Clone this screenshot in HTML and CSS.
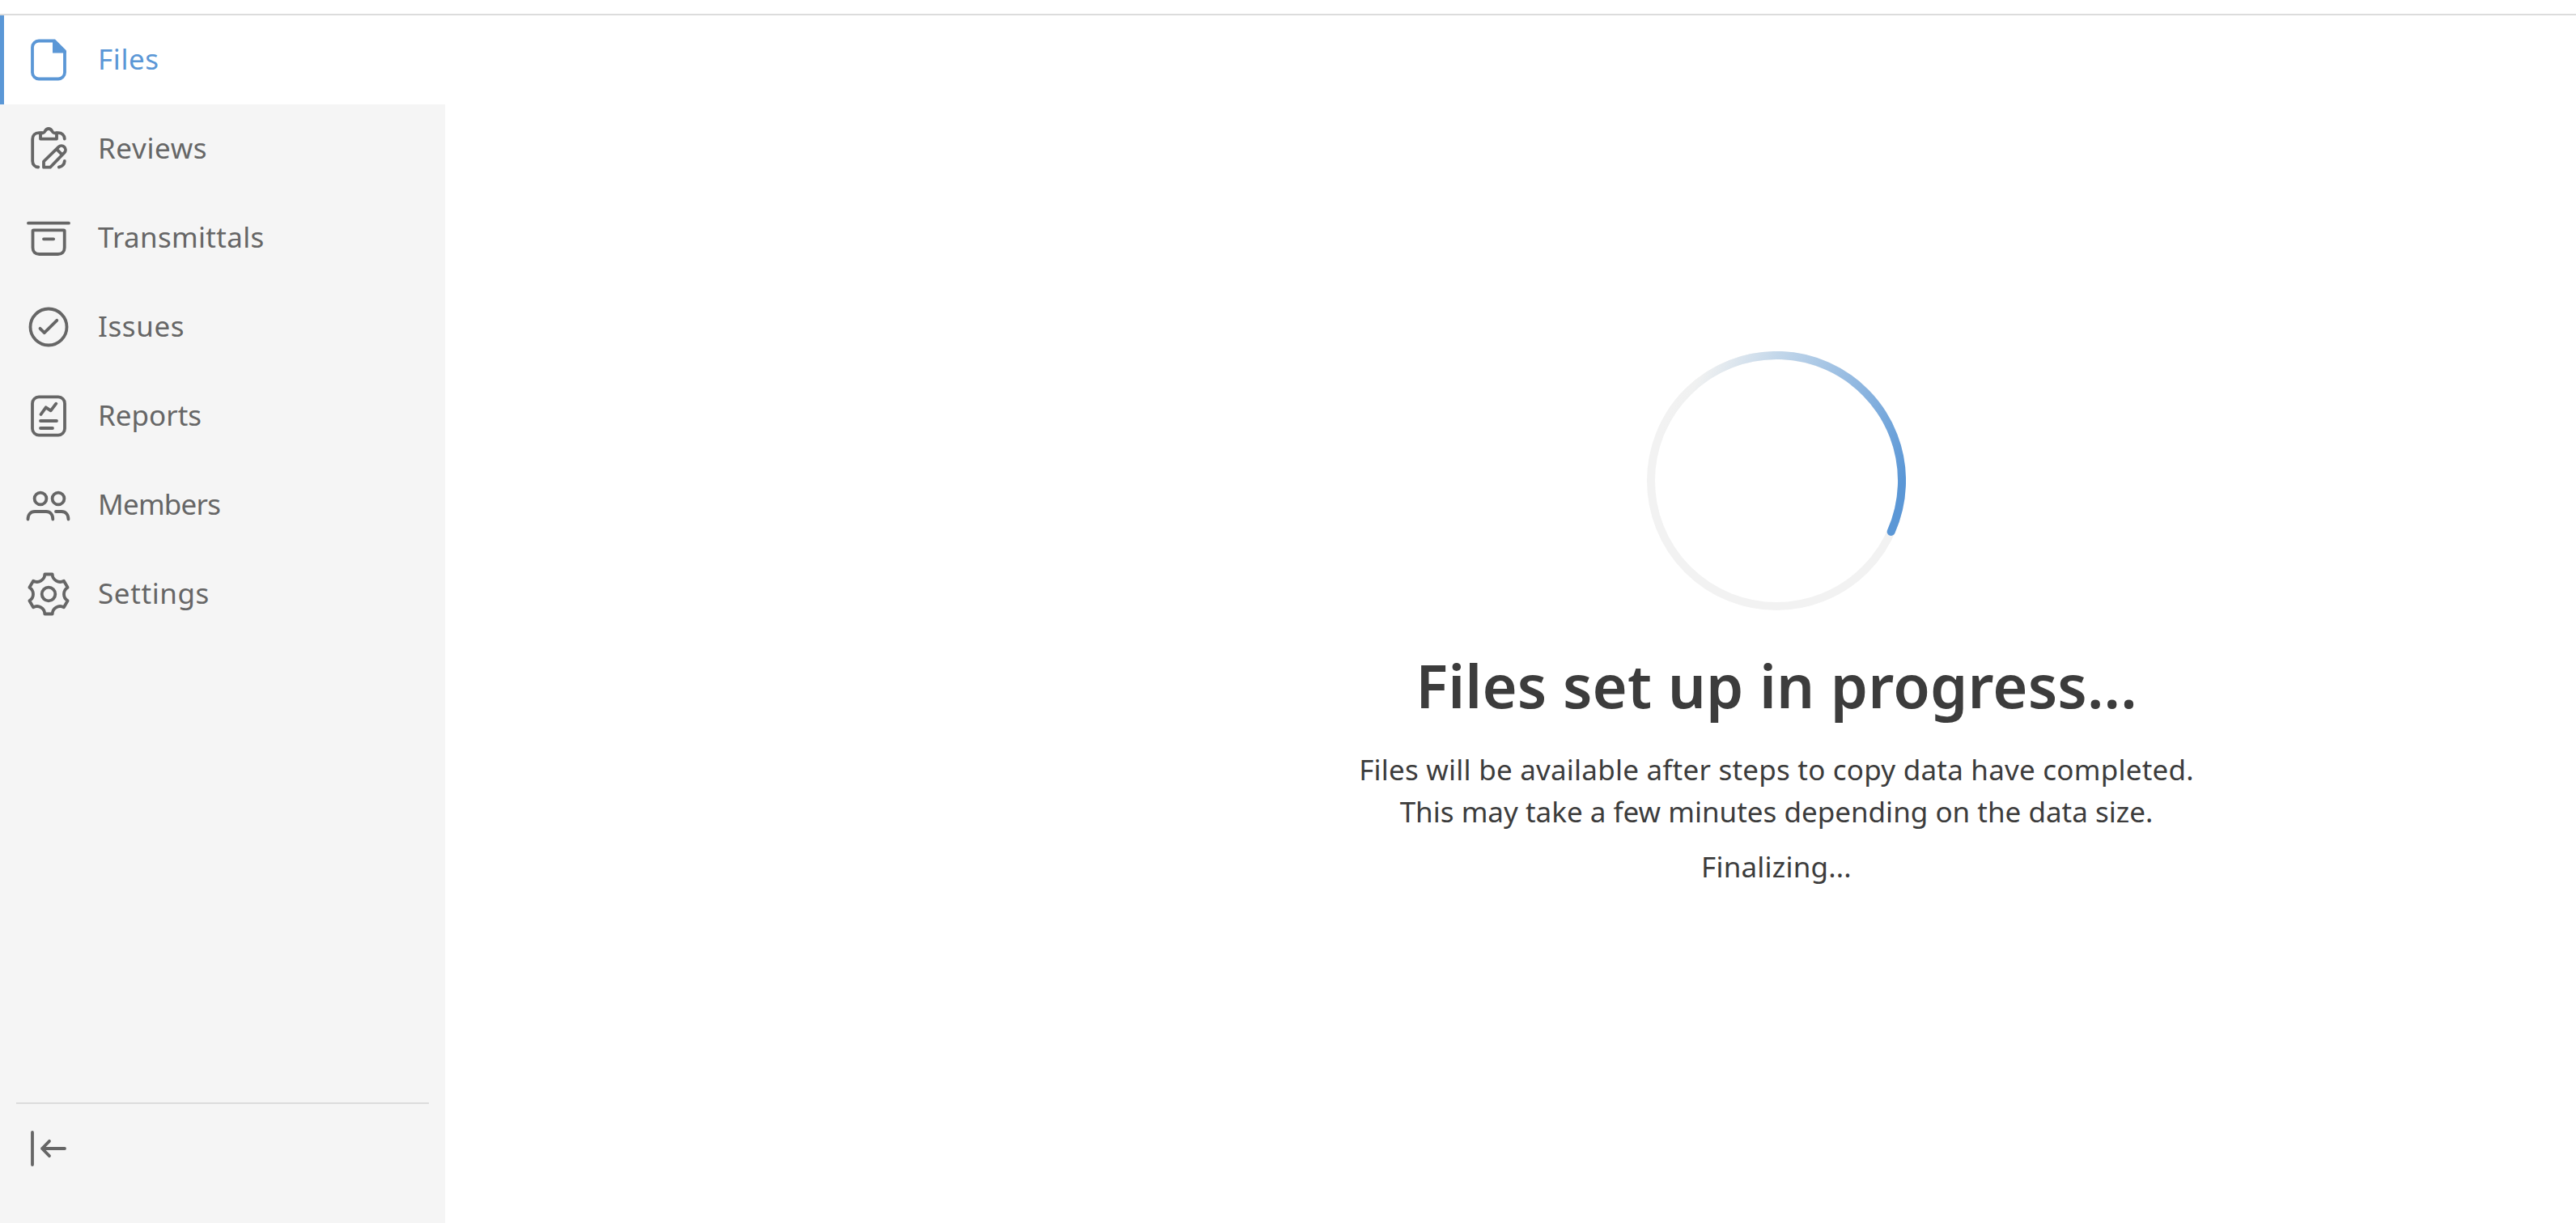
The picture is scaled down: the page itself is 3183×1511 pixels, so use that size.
FILE: index.html
```html
<!DOCTYPE html>
<html lang="en">
<head>
<meta charset="utf-8">
<title>Files</title>
<link rel="stylesheet" href="styles.css">
</head>
<body>
<header class="topbar"></header>
<div class="layout">
  <aside class="sidebar">
    <nav class="nav">
      <a class="nav-item active">
        <svg class="icon" viewBox="0 0 60 60"><path d="M35 6.5H18a8 8 0 0 0-8 8v31a8 8 0 0 0 8 8h24a8 8 0 0 0 8-8V20"/><path class="solid" d="M35 4.6h3L52 18.6v2.9H35z"/></svg>
        <span class="label files">Files</span>
      </a>
      <a class="nav-item">
        <svg class="icon" viewBox="0 0 60 60"><path d="M17.3 52.5C13 52.3 10.2 49 10.2 45V18c0-4.7 3-7.800 7.800-7.800h4"/><path d="M20 10.400v7.200h20v-7.200h-3C34 10.400 34.800 5 30 5s-4 5.400-7 5.400z"/><path d="M40 10.200h2c4.500 0 7.500 2.800 7.800 7.300M49.800 45c-.3 4-3 7-7 7.500"/><path d="M24 52.700V45.500L42.300 27.600a5 5 0 0 1 7.200 7.100L32 52.700zM39.800 30.200l7 7"/></svg>
        <span class="label reviews">Reviews</span>
      </a>
      <a class="nav-item">
        <svg class="icon" viewBox="0 0 60 60"><path d="M5 11.700h50M11.500 20.300h37.200q1 0 1 1V42c0 5-3 8-8 8H18.500c-5 0-8-3-8-8V21.300q0-1 1-1zM24 31.300h12.200"/></svg>
        <span class="label transmittals">Transmittals</span>
      </a>
      <a class="nav-item">
        <svg class="icon" viewBox="0 0 60 60"><circle cx="30" cy="30" r="22.500"/><path d="M19.500 31.800l5.300 5.400 15.500-15.400"/></svg>
        <span class="label issues">Issues</span>
      </a>
      <a class="nav-item">
        <svg class="icon" viewBox="0 0 60 60"><rect x="10" y="6.400" width="40" height="47.200" rx="8"/><path d="M20.500 28l6.200-8.700 6 4 6.600-8.600M20 36h20M20 45h15"/></svg>
        <span class="label reports">Reports</span>
      </a>
      <a class="nav-item">
        <svg class="icon" viewBox="0 0 60 60"><circle cx="20" cy="22" r="7.400"/><circle cx="42" cy="22" r="7.400"/><path d="M4.500 47.500C4.500 41.500 8 38 13 38h14c5 0 8.300 3.500 8.300 9.500M39 38h7c5 0 8.500 3.500 8.500 9.500"/></svg>
        <span class="label members">Members</span>
      </a>
      <a class="nav-item">
        <svg class="icon" viewBox="0 0 60 60"><circle cx="30" cy="30" r="8.300"/><path d="M25.300 5.500h9.400A9.600 9.600 0 0 0 48.900 13.700L53.600 21.800A9.600 9.600 0 0 0 53.600 38.200L48.900 46.300A9.600 9.600 0 0 0 34.700 54.500H25.300A9.600 9.600 0 0 0 11.100 46.300L6.400 38.200A9.600 9.600 0 0 0 6.400 21.800L11.100 13.700A9.600 9.600 0 0 0 25.300 5.500z"/></svg>
        <span class="label settings">Settings</span>
      </a>
    </nav>
    <div class="sidebar-footer">
      <svg class="icon" viewBox="0 0 60 60"><path d="M10 10v40M22 30h28M31 20.800L22 30l9 9.200"/></svg>
    </div>
  </aside>
  <main class="content">
    <svg class="spinner" viewBox="0 0 320 320">
      <defs>
        <linearGradient id="arc" gradientUnits="userSpaceOnUse" x1="18.300" y1="97.100" x2="301.700" y2="222.900">
          <stop offset="0" stop-color="#f2f2f2"/>
          <stop offset=".05" stop-color="#f0f1f1"/>
          <stop offset=".3" stop-color="#c3d7ea"/>
          <stop offset=".72" stop-color="#84b0de"/>
          <stop offset=".96" stop-color="#5b97d6"/>
          <stop offset="1" stop-color="#5b97d6"/>
        </linearGradient>
      </defs>
      <circle class="track" cx="160" cy="160" r="155"/>
      <path class="arc" d="M18.300 97.100A155 155 0 0 1 301.700 222.900"/>
    </svg>
    <h1 class="title">Files set up in progress...</h1>
    <p class="text">
      <span class="line-one">Files will be available after steps to copy data have completed.</span><br>
      <span>This may take a few minutes depending on the data size.</span>
    </p>
    <p class="text status">Finalizing...</p>
  </main>
</div>
</body>
</html>
```
FILE: styles.css
```css
* {
  box-sizing: border-box;
}

body {
  margin: 0;
  height: 1511px;
  display: flex;
  flex-direction: column;
  background: #fff;
  color: #3c3c3c;
  font-family: "Noto Sans", sans-serif;
  font-size: 35px;
}

.topbar {
  flex: none;
  height: 19px;
  border-bottom: 2px solid #dcdcdc;
}

.layout {
  flex: 1;
  display: flex;
}

.sidebar {
  flex: none;
  width: 550px;
  display: flex;
  flex-direction: column;
  justify-content: space-between;
  background: #f5f5f5;
  color: #666;
}

.nav {
  display: flex;
  flex-direction: column;
}

.nav-item {
  display: flex;
  align-items: center;
  gap: 31px;
  height: 110px;
  padding-left: 25px;
  border-left: 5px solid transparent;
}

.nav-item.active {
  background: #fff;
  border-left-color: #5b97d6;
  color: #5b97d6;
}

.icon {
  flex: none;
  width: 60px;
  height: 60px;
  fill: none;
  stroke: currentColor;
  stroke-width: 3.8;
  stroke-linecap: round;
  stroke-linejoin: round;
}

.icon .solid {
  fill: currentColor;
  stroke: none;
}

.active .icon {
  stroke-linecap: butt;
}

.label {
  line-height: 48px;
  padding-bottom: 3px;
}

.files,
.reviews,
.issues,
.settings {
  letter-spacing: 0.6px;
}

.transmittals {
  letter-spacing: 0.3px;
}

.members {
  letter-spacing: -0.8px;
}

.sidebar-footer {
  height: 149px;
  margin: 0 20px;
  padding: 25px 10px;
  border-top: 2px solid #dcdcdc;
}

.content {
  flex: 1;
  padding: 415px 0 0 657px;
  display: flex;
  flex-direction: column;
  align-items: center;
  text-align: center;
}

.spinner {
  width: 320px;
  height: 320px;
  fill: none;
  stroke-width: 10;
}

.track {
  stroke: #f2f2f2;
}

.arc {
  stroke: url(#arc);
  stroke-linecap: round;
}

.title {
  margin: 45px 0 30px;
  font-size: 74px;
  font-weight: 600;
  line-height: 96px;
  letter-spacing: 0.17px;
}

.text {
  margin: 0;
  line-height: 52px;
}

.line-one {
  letter-spacing: 0.22px;
}

.status {
  margin-top: 16px;
  letter-spacing: 0.2px;
}
```
